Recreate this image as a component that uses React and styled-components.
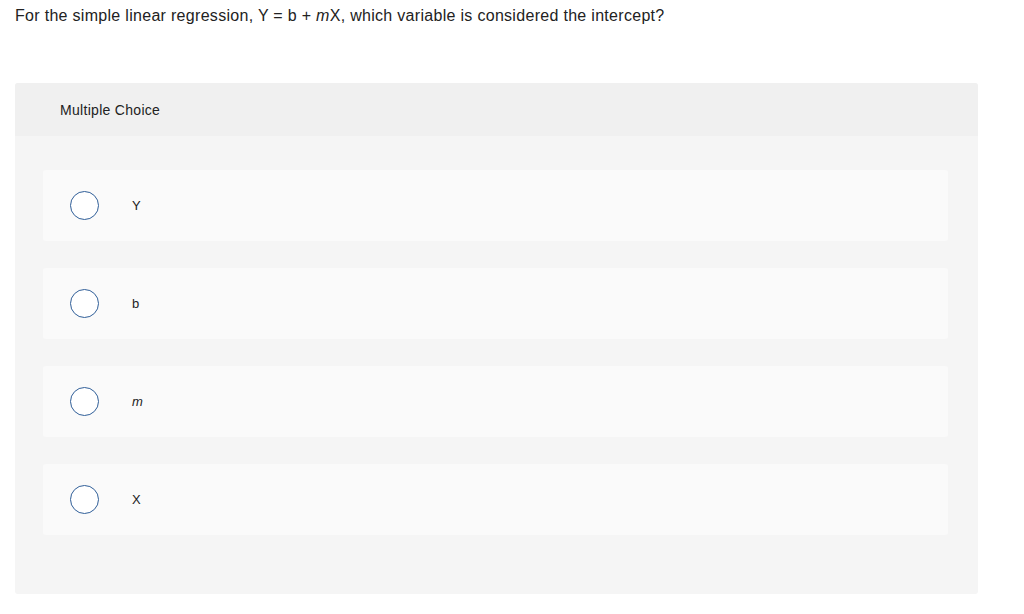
import React from 'react'
import styled, { createGlobalStyle } from 'styled-components'

const GlobalStyle = createGlobalStyle`
    body {
        margin: 0;
        background: #ffffff;
        font-family: "Liberation Sans", Arial, sans-serif;
        color: #222222;
    }
`;

const Page = styled.div`
    padding: 6px 46px 21px 15px;
`;

const Question = styled.p`
    margin: 0 0 57px 0;
    font-size: 16px;
    line-height: 20px;
    letter-spacing: 0.3px;
    color: #222222;

    em {
        font-style: italic;
    }
`;

const Panel = styled.section`
    background-color: #f5f5f5;
    border-radius: 3px;
    overflow: hidden;
`;

const PanelHeader = styled.div`
    height: 53px;
    display: flex;
    align-items: center;
    padding-left: 45px;
    background-color: #f0f0f0;
    font-size: 14px;
    letter-spacing: 0.3px;
    color: #222222;
`;

const OptionList = styled.ul`
    list-style: none;
    margin: 0;
    padding: 34px 30px 59px 28px;
    display: flex;
    flex-direction: column;
    gap: 27px;
`;

const Option = styled.li`
    height: 71px;
    display: flex;
    align-items: center;
    padding-left: 27px;
    background-color: #fafafa;
    border-radius: 3px;
`;

const Radio = styled.span`
    box-sizing: border-box;
    width: 29px;
    height: 29px;
    border-radius: 50%;
    border: 1.5px solid #2f5e98;
    background-color: #ffffff;
    flex-shrink: 0;
`;

const Label = styled.span`
    margin-left: 33px;
    font-size: 13px;
    color: #222222;
    font-style: ${props => (props.$italic ? 'italic' : 'normal')};
`;

const options = [
    { text: 'Y' },
    { text: 'b' },
    { text: 'm', italic: true },
    { text: 'X' },
];

const App = () => {
    return (
        <>
            <GlobalStyle />
            <Page>
                <Question>
                    For the simple linear regression, Y = b + <em>m</em>X, which variable is considered the intercept?
                </Question>
                <Panel>
                    <PanelHeader>Multiple Choice</PanelHeader>
                    <OptionList>
                        {options.map(opt => (
                            <Option key={opt.text}>
                                <Radio />
                                <Label $italic={opt.italic}>{opt.text}</Label>
                            </Option>
                        ))}
                    </OptionList>
                </Panel>
            </Page>
        </>
    )
}

export default App
